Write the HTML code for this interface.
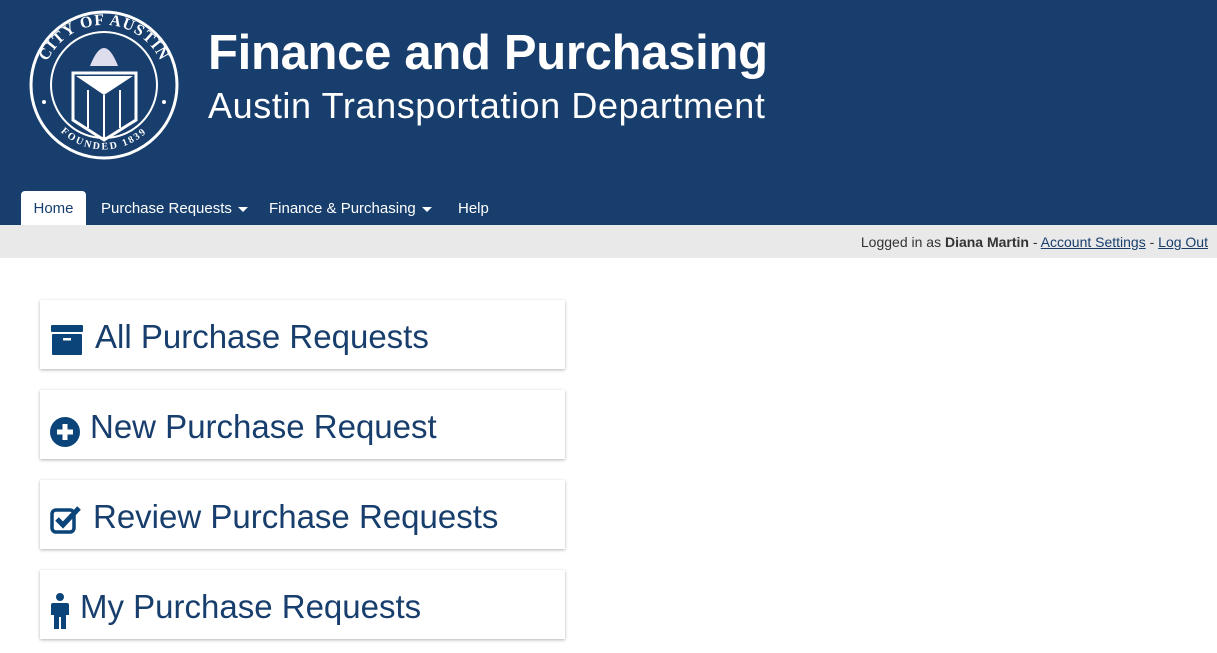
<!DOCTYPE html>
<html><head><style>
body{margin:0;width:1217px;height:653px;overflow:hidden;font-family:"Liberation Sans",sans-serif;background:#fff}
.hd{position:absolute;left:0;top:0;width:1217px;height:225px;background:#173e6c}
.t1{position:absolute;left:208px;top:25px;color:#fff;font-weight:bold;font-size:49px;letter-spacing:-0.3px}
.t2{position:absolute;left:208px;top:85px;color:#fff;font-size:36px;letter-spacing:0.6px}
.nav{position:absolute;top:191px;height:34px;font-size:15px;color:#fff;line-height:36px}
.home{left:21px;width:65px;background:#fff;color:#173e6c;text-align:center;border-radius:4px 4px 0 0}
.bar{position:absolute;top:225px;left:0;width:1217px;height:33px;background:#e9e9e9;font-size:14px;color:#333;text-align:right;line-height:34px}
.bar a{color:#1a3e6c;text-decoration:underline}
.card{position:absolute;left:40px;width:525px;height:69px;background:#fff;box-shadow:0 1px 3px rgba(0,0,0,.3);color:#173e6c;font-size:33px;line-height:74px}
.card svg{position:absolute}
.card span{position:absolute;top:0}
.car{display:inline-block;width:0;height:0;border-left:5px solid transparent;border-right:5px solid transparent;border-top:5px solid #fff;vertical-align:middle;margin-left:6px}
</style></head><body>
<div class="hd">
<svg style="position:absolute;left:28px;top:10px" width="152" height="150" viewBox="0 0 152 150">
<defs><path id="top" d="M15 88 A62 62 0 1 1 137 88"/><path id="bot" d="M20 104 A62 62 0 0 0 132 104"/></defs>
<circle cx="76" cy="75" r="73" fill="none" stroke="#fff" stroke-width="3"/>
<circle cx="76" cy="75" r="53" fill="none" stroke="#fff" stroke-width="2"/>
<text fill="#fff" font-size="16" font-weight="bold" font-family="Liberation Serif" letter-spacing="1" text-anchor="middle"><textPath href="#top" startOffset="50%">CITY OF AUSTIN</textPath></text>
<text fill="#fff" font-size="10" font-weight="bold" font-family="Liberation Serif" letter-spacing="2" text-anchor="middle"><textPath href="#bot" startOffset="50%">FOUNDED 1839</textPath></text>
<circle cx="16" cy="92" r="2" fill="#fff"/><circle cx="136" cy="92" r="2" fill="#fff"/>
<path d="M45 63 H108 V110 L76 130 L45 110 Z" fill="none" stroke="#fff" stroke-width="3"/>
<path d="M48 66 H105 L76 85 Z" fill="#fff"/>
<path d="M60 80 V118 M92 80 V118 M76 85 V128" stroke="#fff" stroke-width="2"/>
<path d="M62 56 Q76 20 90 56 Z" fill="#dde"/>
</svg>
<div class="t1">Finance and Purchasing</div>
<div class="t2">Austin Transportation Department</div>
<div class="nav home">Home</div>
<div class="nav" style="left:101px">Purchase Requests<span class="car"></span></div>
<div class="nav" style="left:269px">Finance &amp; Purchasing<span class="car"></span></div>
<div class="nav" style="left:458px">Help</div>
</div>
<div class="bar"><span style="padding-right:9px">Logged in as <b>Diana Martin</b> - <a>Account Settings</a> - <a>Log Out</a></span></div>
<div class="card" style="top:300px"><svg style="left:11px;top:25px" width="32" height="30" viewBox="0 0 32 30"><rect x="0" y="0" width="32" height="7" rx="1" fill="#0b4479"/><rect x="1" y="9" width="30" height="21" rx="1" fill="#0b4479"/><rect x="12" y="13" width="8" height="2.5" fill="#fff"/></svg><span style="left:55px">All Purchase Requests</span></div>
<div class="card" style="top:390px"><svg style="left:10px;top:27px" width="30" height="30" viewBox="0 0 30 30"><circle cx="15" cy="15" r="15" fill="#0b4479"/><path d="M15 7V23M7 15H23" stroke="#fff" stroke-width="5"/></svg><span style="left:50px">New Purchase Request</span></div>
<div class="card" style="top:480px"><svg style="left:10px;top:24px" width="32" height="30" viewBox="0 0 32 30"><rect x="2" y="6" width="22" height="22" rx="4" fill="none" stroke="#0b4479" stroke-width="3.5"/><path d="M7 15 L13 21 L29 4" fill="none" stroke="#0b4479" stroke-width="5"/></svg><span style="left:53px">Review Purchase Requests</span></div>
<div class="card" style="top:570px"><svg style="left:10px;top:23px" width="20" height="36" viewBox="0 0 20 36"><circle cx="10" cy="4" r="4" fill="#0b4479"/><path d="M3 10 H17 Q19 10 19 12 V22 H16 V36 H11 V24 H9 V36 H4 V22 H1 V12 Q1 10 3 10Z" fill="#0b4479"/></svg><span style="left:40px">My Purchase Requests</span></div>
</body></html>
